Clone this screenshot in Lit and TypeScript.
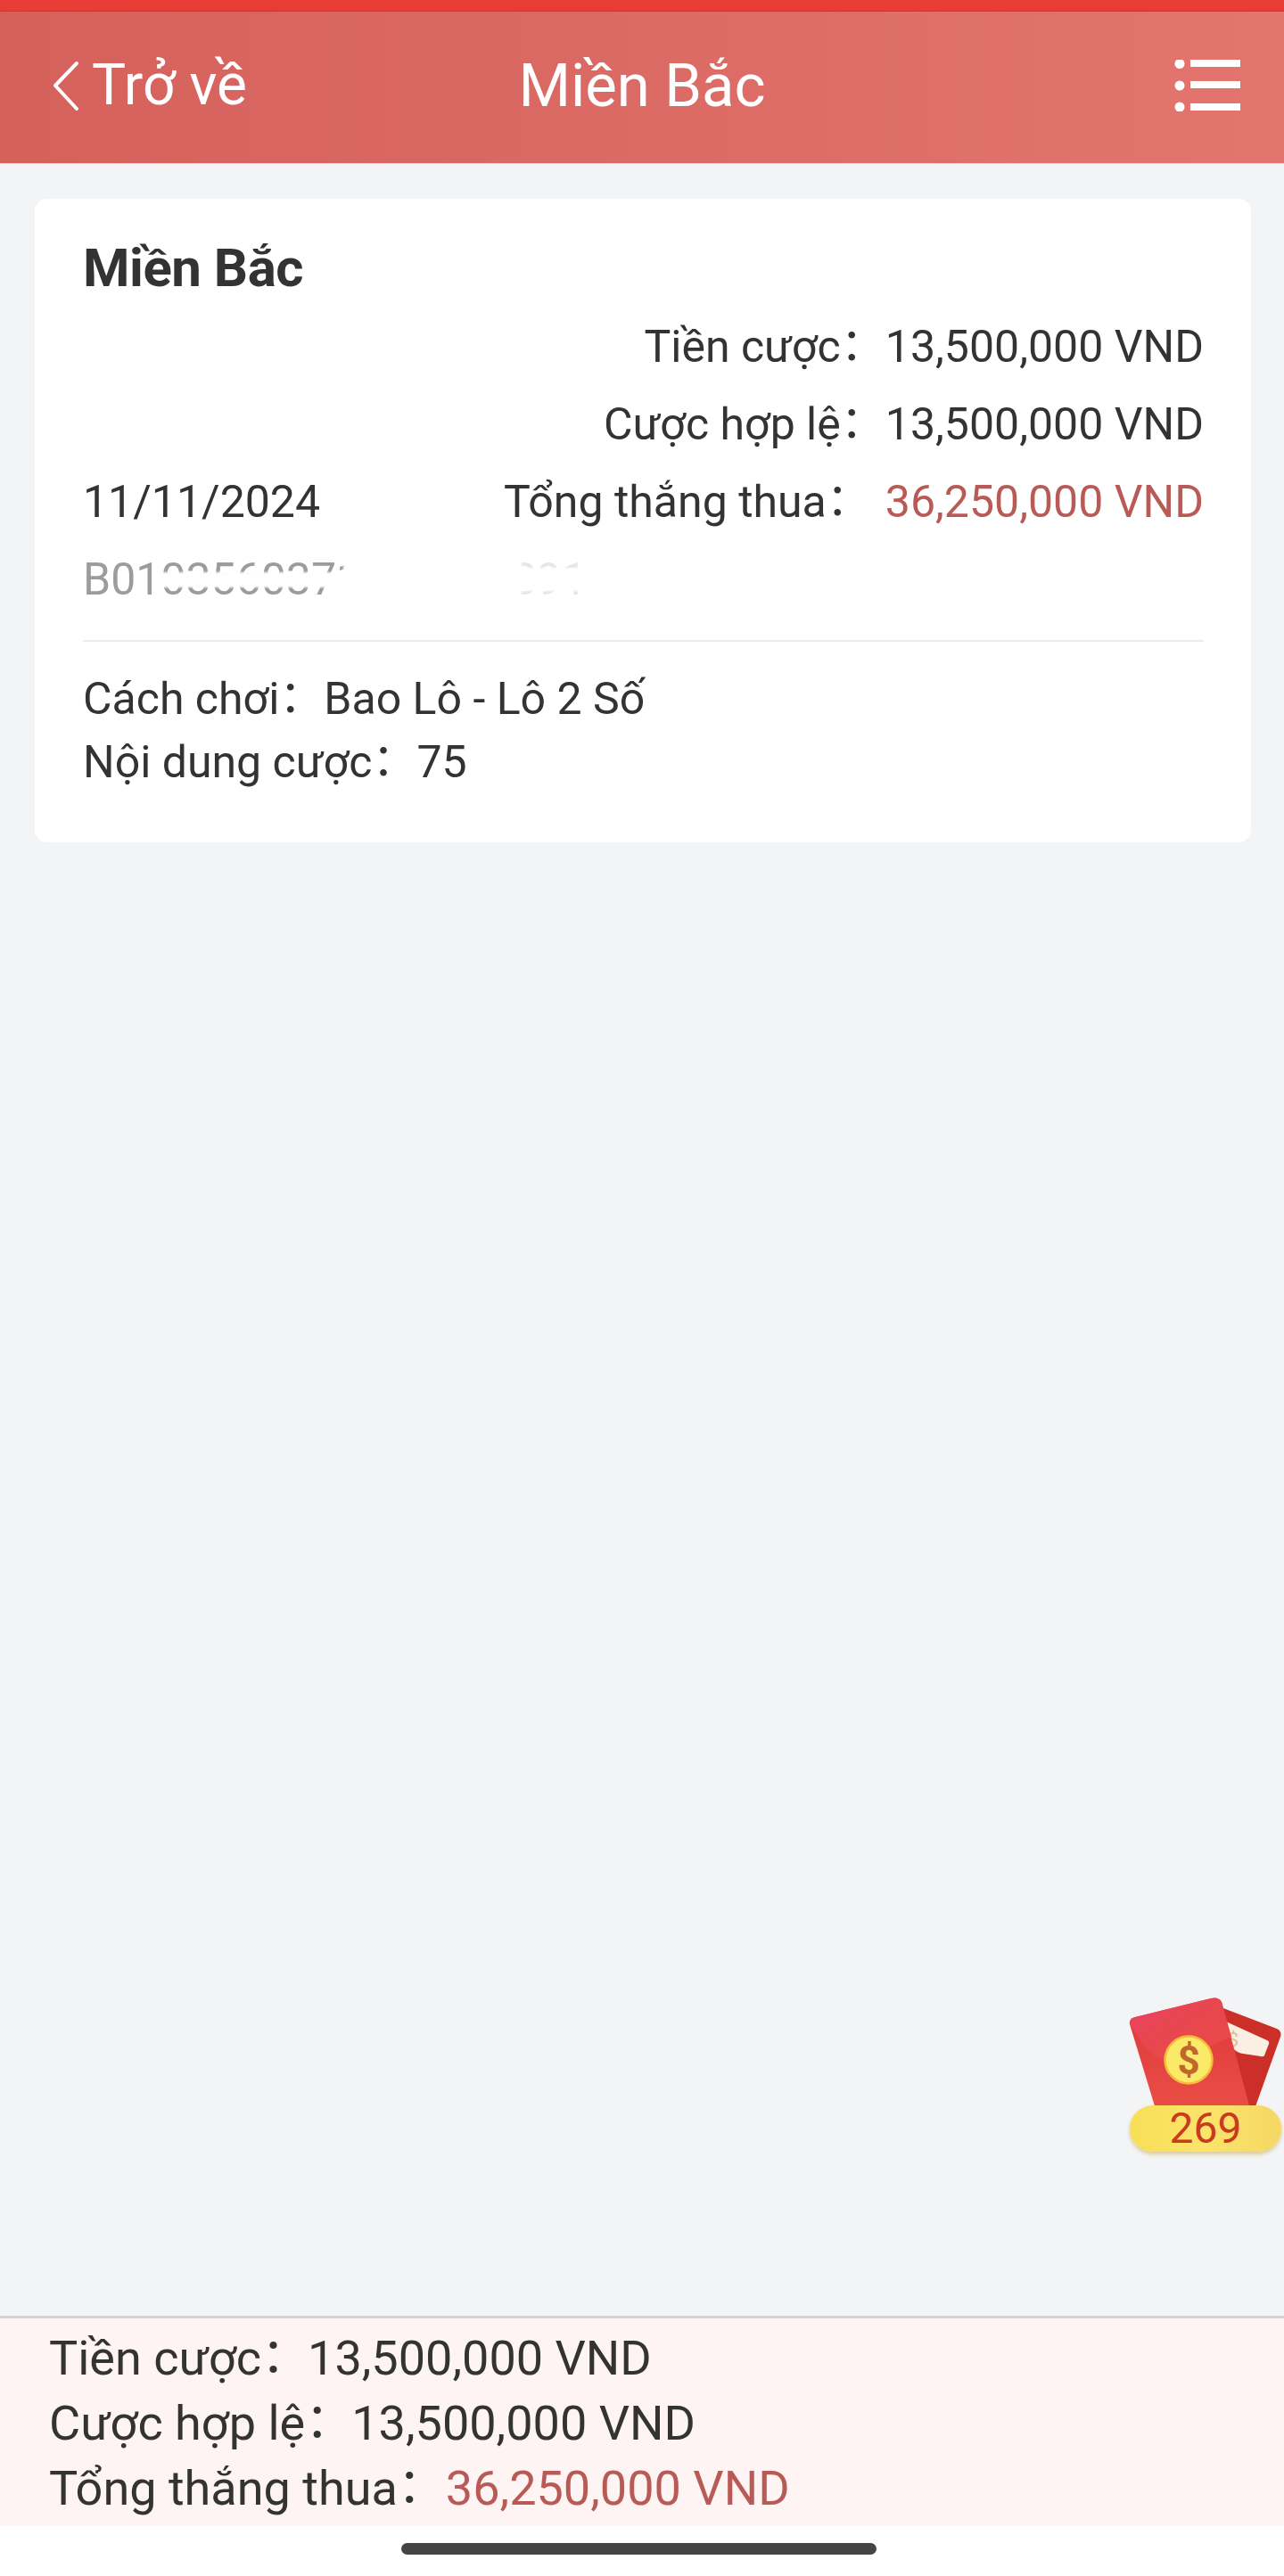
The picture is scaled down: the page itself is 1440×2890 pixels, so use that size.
import { LitElement, html, css } from "lit";
import { customElement } from "lit/decorators.js";

@customElement("app-root")
export class AppRoot extends LitElement {
  static styles = css`
    :host { display: block; width: 1440px; height: 2890px; position: relative; overflow: hidden; background: #fff;
      font-family: Roboto, "Noto Sans CJK SC", sans-serif; color: #333; }
    .page { display: flex; flex-direction: column; height: 100%; }
    .status { height: 13px; background: #ea3c36; border-bottom: 1px solid #c93531; box-sizing: border-box; flex: none; }
    .header { flex: none; height: 171px; box-sizing: border-box; padding: 0 49px 5px 49px; display: grid; grid-template-columns: 1fr auto 1fr; align-items: center; color: #fff;
      background: linear-gradient(90deg, #d5615b 0%, #e3746e 100%); border-bottom: 1px solid #f3d9d7; }
    .back { display: flex; align-items: center; gap: 14px; margin-left: 10px; font-size: 64px; line-height: 70px; }
    .back svg { width: 30px; height: 56px; display: block; }
    .title { font-size: 67px; line-height: 80px; }
    .menu { justify-self: end; display: block; width: 74px; height: 58px; }
    .main { flex: 1; background: #f3f4f6; padding: 39px 37px 0 39px; }
    .card { background: #fff; border-radius: 14px; padding: 32px 53px 54px 54px; }
    .card h2 { margin: 0; font-size: 60px; font-weight: 700; line-height: 91px; color: #333; letter-spacing: -0.5px; }
    .meta { display: flex; justify-content: space-between; align-items: flex-end; }
    .right { display: flex; flex-direction: column; align-items: flex-end; }
    .row { font-size: 50px; line-height: 87px; white-space: nowrap; display: flex; }
    .row.wide .colon { margin-right: 16px; }
    .colon { font-family: "Noto Sans CJK SC", sans-serif; display: inline-block; transform: translateY(-7px); }
    .foot-row .colon { margin-right: -2px; }
    .foot-row.wide .colon { margin-right: 0; }
    .red { color: #b85a55; }
    .date { font-size: 50px; line-height: 87px; }
    .id { position: relative; height: 77px; font-size: 50px; line-height: 86px; color: #9c9c9c; white-space: nowrap; overflow: hidden; }
    .wipe { position: absolute; background: #fff; filter: blur(1px); }
    .wipe.band { left: 84px; width: 220px; top: 35px; height: 17px; }
    .wipe.solid { left: 292px; width: 200px; top: 0; height: 77px; }
    .wipe.mid { left: 480px; width: 100px; top: 30px; height: 26px; }
    .wipe.veil { left: 480px; width: 100px; top: 0; height: 77px; background: rgba(255,255,255,.75); }
    .wipe.tail { left: 560px; width: 400px; top: 0; height: 77px; }
    .divider { height: 2px; background: #ececec; margin: 34px 0 29px; }
    .line { font-size: 50px; line-height: 71px; white-space: nowrap; display: flex; }
    .footer { flex: none; height: 236px; box-sizing: border-box; border-top: 3px solid #d5d2d2; background: #fef4f3; padding: 8px 0 0 55px; }
    .foot-row { font-size: 54px; line-height: 73px; white-space: nowrap; display: flex; color: #333; }
    .home { flex: none; height: 56px; background: #fff; display: flex; justify-content: center; padding: 19px 7px 0 0; box-sizing: border-box; }
    .home i { display: block; width: 533px; height: 13px; border-radius: 7px; background: #444; }
    .packet { position: absolute; left: 1266px; top: 2236px; width: 172px; height: 180px; }
    .packet svg { position: absolute; left: 0; top: 0; width: 172px; height: 130px; display: block; }
    .badge { position: absolute; left: 1px; top: 126px; width: 170px; height: 52px; border-radius: 26px; box-sizing: border-box;
      background: linear-gradient(90deg, #f8df57, #fbe46a 50%, #f5d763); box-shadow: 0 3px 4px rgba(190,150,40,.45);
      color: #c93a1e; font-size: 48px; line-height: 52px; text-align: center; }
  `;

  private kv(label: string, val: string, cls = "row", red = false) {
    return html`<div class=${cls}><span>${label}</span><span class="colon">：</span><span class=${red ? "red" : ""}>${val}</span></div>`;
  }

  render() {
    return html`
      <div class="page">
        <div class="status"></div>
        <div class="header">
          <div class="back">
            <svg viewBox="0 0 30 56" fill="none" stroke="#fff" stroke-width="4" stroke-linecap="round" stroke-linejoin="round"><path d="M27 3 3 28l24 26"/></svg>
            <span>Trở về</span>
          </div>
          <div class="title">Miền Bắc</div>
          <svg class="menu" viewBox="0 0 74 58" fill="#fff">
            <circle cx="6" cy="4.5" r="5.5"/><circle cx="6" cy="29" r="5.5"/><circle cx="6" cy="53" r="5.5"/>
            <rect x="18" y="0" width="56" height="8"/><rect x="18" y="24" width="56" height="8"/><rect x="18" y="49" width="56" height="8"/>
          </svg>
        </div>
        <div class="main">
          <div class="card">
            <h2>Miền Bắc</h2>
            <div class="meta">
              <div class="date">11/11/2024</div>
              <div class="right">
                ${this.kv("Tiền cược", "13,500,000 VND")}
                ${this.kv("Cược hợp lệ", "13,500,000 VND")}
                ${this.kv("Tổng thắng thua", "36,250,000 VND", "row wide", true)}
              </div>
            </div>
            <div class="id">B0103560371204567891234<span class="wipe solid"></span><span class="wipe band"></span><span class="wipe mid"></span><span class="wipe veil"></span><span class="wipe tail"></span></div>
            <div class="divider"></div>
            ${this.kv("Cách chơi", "Bao Lô - Lô 2 Số", "line")}
            ${this.kv("Nội dung cược", "75", "line")}
          </div>
        </div>
        <div class="footer">
          ${this.kv("Tiền cược", "13,500,000 VND", "foot-row")}
          ${this.kv("Cược hợp lệ", "13,500,000 VND", "foot-row")}
          ${this.kv("Tổng thắng thua", "36,250,000 VND", "foot-row wide", true)}
        </div>
        <div class="home"><i></i></div>
      </div>
      <div class="packet">
        <svg viewBox="0 0 172 130">
          <defs>
            <linearGradient id="a" x1="0" y1="0" x2="1" y2="1"><stop offset="0" stop-color="#ec4268"/><stop offset=".4" stop-color="#e84650"/><stop offset="1" stop-color="#ea4b44"/></linearGradient>
            <linearGradient id="b" x1="0" y1="0" x2="0" y2="1"><stop offset="0" stop-color="#df363c"/><stop offset="1" stop-color="#e94e45"/></linearGradient>
          </defs>
          <path d="M106 17 166 40q6 3 4 9l-29 81H100z" fill="#cc2f27"/>
          <path d="M109 32 155 53q3 1 2 4l-5 13q-1 2-4 1l-20-3q-7-1-12-7z" fill="#fbeee2"/>
          <text x="117" y="60" text-anchor="middle" font-family="Roboto, sans-serif" font-size="22" fill="#e3bc9a">$</text>
          <path d="M1 35Q0 29 7 27L92 6q9-2 12 4l32 120H30z" fill="url(#b)"/>
          <path d="M1 35Q0 29 7 27L92 6q9-2 12 4l11 39q-22 8-48 26-22 8-40-6-11-9-15-18z" fill="url(#a)"/>
          <circle cx="67" cy="75" r="26.5" fill="#fbe968" stroke="#f5bb3a" stroke-width="2.5"/>
          <text x="67" y="91" text-anchor="middle" font-family="Roboto, sans-serif" font-size="44" font-weight="700" fill="#c0682c">$</text>
        </svg>
        <div class="badge">269</div>
      </div>
    `;
  }
}
